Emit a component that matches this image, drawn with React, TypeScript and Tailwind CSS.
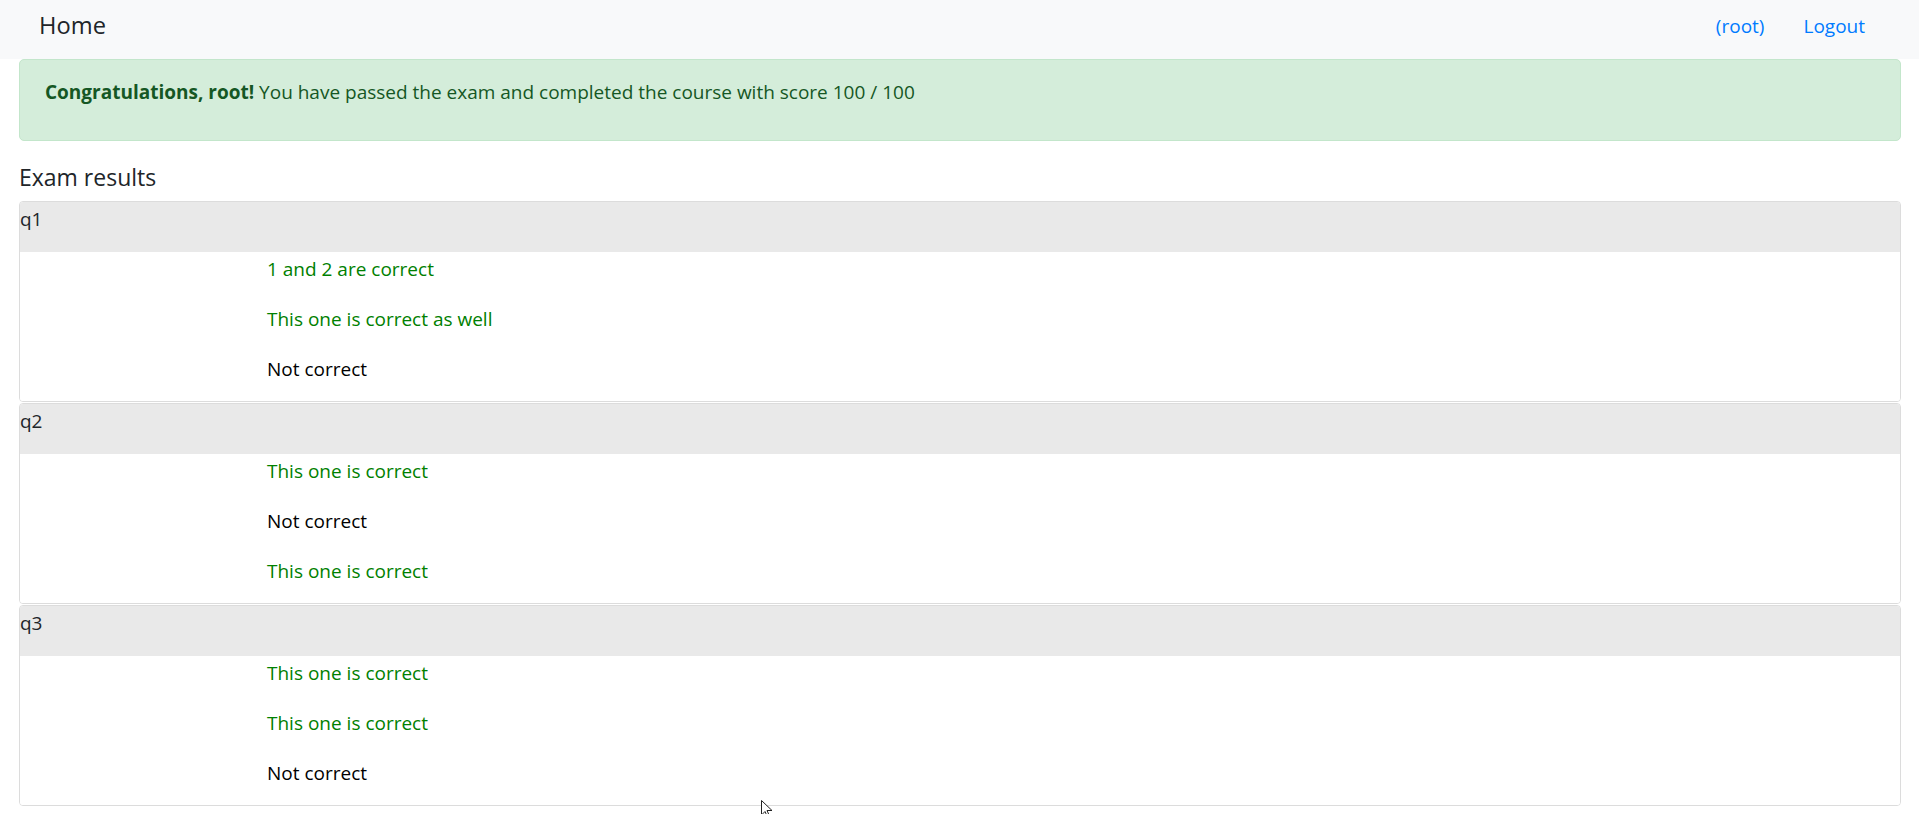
const questions = [
  {
    id: 'q1',
    answers: [
      { text: '1 and 2 are correct', correct: true },
      { text: 'This one is correct as well', correct: true },
      { text: 'Not correct', correct: false },
    ],
  },
  {
    id: 'q2',
    answers: [
      { text: 'This one is correct', correct: true },
      { text: 'Not correct', correct: false },
      { text: 'This one is correct', correct: true },
    ],
  },
  {
    id: 'q3',
    answers: [
      { text: 'This one is correct', correct: true },
      { text: 'This one is correct', correct: true },
      { text: 'Not correct', correct: false },
    ],
  },
];

const QuestionCard: React.FC<{ id: string; answers: { text: string; correct: boolean }[] }> = ({ id, answers }) => (
  <div className="mb-[1px] rounded-[4px] border border-[#dcdcdc] overflow-hidden">
    <div className="bg-[#e9e9e9] pt-[2px] pb-[18px] leading-[30px] text-[#212529]">{id}</div>
    <div className="flex flex-col gap-[20px] pt-[2px] pb-[17px] pl-[247px] bg-white">
      {answers.map((a, i) => (
        <div key={i} className={`leading-[30px] ${a.correct ? 'text-[#008000]' : 'text-black'}`}>
          {a.text}
        </div>
      ))}
    </div>
  </div>
);

const App = () => {
  return (
    <div className="relative min-h-screen bg-white text-[19px] text-[#212529] font-['Segoe_UI','Open_Sans',sans-serif]">
      {/* Navbar */}
      <nav className="flex h-[59px] items-center justify-between bg-[#f8f9fa] pl-[39px] pr-[54px] pb-[8px]">
        <a className="text-[23.7px] leading-[37px] text-[#212529]">Home</a>
        <div className="flex items-center gap-[39px] leading-[30px] text-[#007bff]">
          <a>(root)</a>
          <a>Logout</a>
        </div>
      </nav>

      <div className="pl-[19px] pr-[18px]">
        {/* Alert */}
        <div className="mb-[21px] rounded-[5px] border border-[#c3e6cb] bg-[#d4edda] px-[25px] pt-[17px] pb-[33px] leading-[30px] text-[#155724]">
          <b className="font-bold">Congratulations, root!</b> You have passed the exam and completed the course with score 100 / 100
        </div>

        <h5 className="mb-[9px] text-[23px] leading-[30px] text-[#212529]">Exam results</h5>

        {questions.map((q) => (
          <QuestionCard key={q.id} id={q.id} answers={q.answers} />
        ))}
      </div>

      {/* mouse pointer */}
      <svg className="absolute left-[761px] top-[800px]" width="12" height="18" viewBox="0 0 12 18">
        <path d="M0.5 0.5 L0.5 15 L4 11.5 L6.5 17 L8.5 16 L6 10.5 L11 10.5 Z" fill="white" stroke="#222" strokeWidth="1" />
      </svg>
    </div>
  );
};

export default App;
